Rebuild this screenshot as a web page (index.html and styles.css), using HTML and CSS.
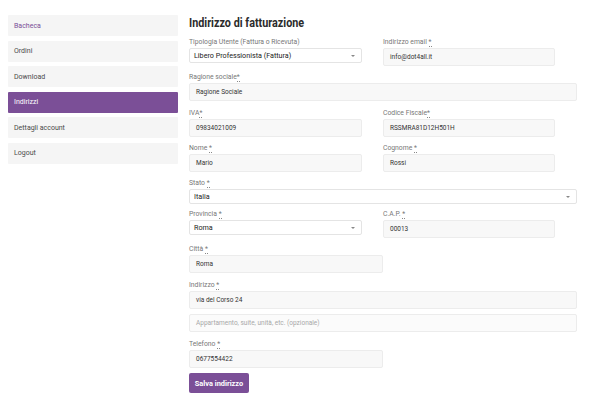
FILE: index.html
```html
<!DOCTYPE html>
<html lang="it">
<head>
<meta charset="utf-8">
<title>Indirizzo di fatturazione</title>
<link rel="stylesheet" href="styles.css">
</head>
<body>
<div class="page">
  <nav class="sidebar">
    <a class="nav-item link" href="#">Bacheca</a>
    <a class="nav-item" href="#">Ordini</a>
    <a class="nav-item" href="#">Download</a>
    <a class="nav-item active" href="#">Indirizzi</a>
    <a class="nav-item" href="#">Dettagli account</a>
    <a class="nav-item" href="#">Logout</a>
  </nav>
  <main class="main">
    <h2 class="title"><span class="title-text">Indirizzo di fatturazione</span></h2>
    <form class="form">
      <div class="row pair">
        <div class="field">
          <label class="label">Tipologia Utente (Fattura o Ricevuta)</label>
          <div class="select"><span>Libero Professionista (Fattura)</span><span class="arrow"></span></div>
        </div>
        <div class="field">
          <label class="label">Indirizzo email <abbr class="req">*</abbr></label>
          <div class="input">info@dot4all.it</div>
        </div>
      </div>
      <div class="row">
        <div class="field">
          <label class="label">Ragione sociale<abbr class="req">*</abbr></label>
          <div class="input">Ragione Sociale</div>
        </div>
      </div>
      <div class="row pair">
        <div class="field">
          <label class="label">IVA<abbr class="req">*</abbr></label>
          <div class="input">09834021009</div>
        </div>
        <div class="field">
          <label class="label">Codice Fiscale<abbr class="req">*</abbr></label>
          <div class="input">RSSMRA81D12H501H</div>
        </div>
      </div>
      <div class="row pair">
        <div class="field">
          <label class="label">Nome <abbr class="req">*</abbr></label>
          <div class="input">Mario</div>
        </div>
        <div class="field">
          <label class="label">Cognome <abbr class="req">*</abbr></label>
          <div class="input">Rossi</div>
        </div>
      </div>
      <div class="row short">
        <div class="field">
          <label class="label">Stato <abbr class="req">*</abbr></label>
          <div class="select"><span>Italia</span><span class="arrow"></span></div>
        </div>
      </div>
      <div class="row pair">
        <div class="field">
          <label class="label">Provincia <abbr class="req">*</abbr></label>
          <div class="select"><span>Roma</span><span class="arrow"></span></div>
        </div>
        <div class="field">
          <label class="label">C.A.P. <abbr class="req">*</abbr></label>
          <div class="input">00013</div>
        </div>
      </div>
      <div class="row half">
        <div class="field">
          <label class="label">Città <abbr class="req">*</abbr></label>
          <div class="input">Roma</div>
        </div>
      </div>
      <div class="row">
        <div class="field">
          <label class="label">Indirizzo <abbr class="req">*</abbr></label>
          <div class="input">via del Corso 24</div>
          <div class="input placeholder second">Appartamento, suite, unità, etc. (opzionale)</div>
        </div>
      </div>
      <div class="row half">
        <div class="field">
          <label class="label">Telefono <abbr class="req">*</abbr></label>
          <div class="input">0677554422</div>
        </div>
      </div>
      <button class="button" type="button">Salva indirizzo</button>
    </form>
  </main>
</div>
</body>
</html>
```
FILE: styles.css
```css
* { box-sizing: border-box; }
html, body { margin: 0; padding: 0; background: #ffffff; }
body {
  font-family: Roboto, "Liberation Sans", Arial, sans-serif;
  color: #3a3a3a;
  font-size: 7px;
}
.page {
  display: flex;
  align-items: flex-start;
  gap: 11px;
  padding: 15px 0 0 8px;
}
.sidebar {
  width: 170px;
  display: flex;
  flex-direction: column;
  gap: 4.6px;
}
.nav-item {
  display: flex;
  align-items: center;
  height: 21px;
  padding-left: 6px;
  background: #f5f5f5;
  color: #4a4a4a;
  text-decoration: none;
  font-size: 7px;
  border-radius: 1px;
}
.nav-item.link { color: #7b4f97; }
.nav-item.active { background: #7b4f97; color: #ffffff; }
.main { width: 388px; }
.title {
  margin: 0 0 8px;
  font-family: Roboto, "Liberation Sans", sans-serif;
  font-weight: 700;
  font-size: 13.5px;
  line-height: 15px;
  color: #2b2b2b;
  white-space: nowrap;
}
.title-text {
  display: inline-block;
  transform: scaleX(0.8);
  transform-origin: left center;
}
.form { display: flex; flex-direction: column; }
.row { display: flex; margin-bottom: 7.3px; }
.row.short { margin-bottom: 6px; }
.row.half { margin-bottom: 7.8px; }
.row .field { width: 100%; }
.row.pair .field { width: 194px; }
.row.pair .field .input, .row.pair .field .select { width: 173px; }
.row.pair .field:last-child .input { width: 172px; }
.row.half .field { width: 194px; }
.label {
  display: block;
  font-size: 6.8px;
  line-height: 8px;
  height: 8px;
  margin-bottom: 2px;
  color: #777777;
  white-space: nowrap;
}
.req {
  text-decoration: none;
  border-bottom: 1px dotted #888;
  color: #777777;
}
.input {
  height: 18px;
  display: flex;
  align-items: center;
  padding-left: 6px;
  background: #f8f8f8;
  border: 1px solid #ececec;
  border-radius: 2px;
  font-size: 6.5px;
  color: #333333;
}
.input.placeholder { color: #a8a8a8; background: #fbfbfb; }
.input.second { margin-top: 5px; }
.select {
  height: 15px;
  display: flex;
  align-items: center;
  justify-content: space-between;
  padding: 0 6px 0 4px;
  background: #ffffff;
  border: 1px solid #e4e4e4;
  border-radius: 2px;
  font-size: 7.2px;
  color: #222222;
}
.arrow {
  width: 0;
  height: 0;
  border-left: 2px solid transparent;
  border-right: 2px solid transparent;
  border-top: 2.5px solid #888888;
}
.button {
  align-self: flex-start;
  margin-top: -2.3px;
  width: 60px;
  height: 20px;
  padding: 0;
  border: none;
  border-radius: 2px;
  background: #7b4f97;
  color: #ffffff;
  font-family: Roboto, "Liberation Sans", sans-serif;
  font-weight: 700;
  font-size: 7.4px;
}
```
